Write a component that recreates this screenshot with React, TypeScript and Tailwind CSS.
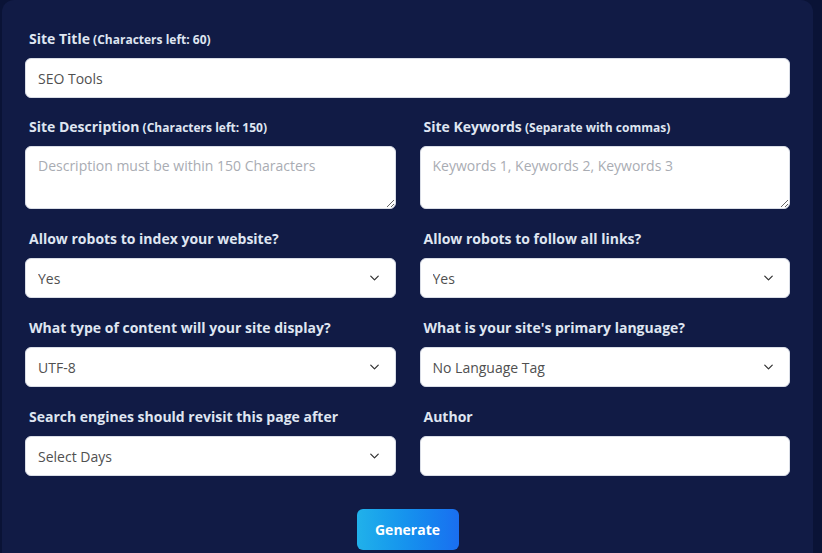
import { ChevronDown } from 'lucide-react'

const font = { fontFamily: '"Open Sans", "Liberation Sans", sans-serif' }

const Label = ({ title, hint }: { title: string; hint?: string }) => (
  <label className="block h-5 leading-5 mb-[9px] pl-1 text-[14px] font-bold text-[#dfe5f1] whitespace-nowrap">
    {title}
    {hint && <span className="text-[12px] font-bold"> ({hint})</span>}
  </label>
)

const inputCls =
  'w-full h-10 rounded-md bg-white px-[12px] text-[14px] text-[#505050] outline-none border border-[#d9dde6] placeholder:text-[#a9acb3]'

const Select = ({ value }: { value: string }) => (
  <div className="relative">
    <select className={`${inputCls} appearance-none pr-8`} defaultValue={value}>
      <option>{value}</option>
    </select>
    <ChevronDown className="absolute right-[14px] top-1/2 -translate-y-1/2 w-[15px] h-[15px] text-[#333] pointer-events-none" strokeWidth={2} />
  </div>
)

const Field = ({ title, hint, children }: { title: string; hint?: string; children: React.ReactNode }) => (
  <div>
    <Label title={title} hint={hint} />
    {children}
  </div>
)

export default function App() {
  return (
    <div className="min-h-screen bg-[#0a1336] pl-[2px] pr-[9px]" style={font}>
      <div className="bg-[#111b45] rounded-t-xl px-[23px] pt-[29px] pb-[10px] min-h-[553px]">
        <div className="flex flex-col gap-[19px]">
          <Field title="Site Title" hint="Characters left: 60">
            <input className={inputCls} defaultValue="SEO Tools" />
          </Field>
          <div className="grid grid-cols-2 gap-x-6 gap-y-5">
            <Field title="Site Description" hint="Characters left: 150">
              <textarea
                className={`${inputCls} h-[63px] py-[8px] block`}
                placeholder="Description must be within 150 Characters"
              />
            </Field>
            <Field title="Site Keywords" hint="Separate with commas">
              <textarea
                className={`${inputCls} h-[63px] py-[8px] block`}
                placeholder="Keywords 1, Keywords 2, Keywords 3"
              />
            </Field>
            <Field title="Allow robots to index your website?">
              <Select value="Yes" />
            </Field>
            <Field title="Allow robots to follow all links?">
              <Select value="Yes" />
            </Field>
            <Field title="What type of content will your site display?">
              <Select value="UTF-8" />
            </Field>
            <Field title="What is your site's primary language?">
              <Select value="No Language Tag" />
            </Field>
            <Field title="Search engines should revisit this page after">
              <Select value="Select Days" />
            </Field>
            <Field title="Author">
              <input className={inputCls} />
            </Field>
          </div>
        </div>
        <div className="flex justify-center mt-[33px]">
          <button className="w-[102px] h-[41px] rounded-md bg-gradient-to-r from-[#21b1ea] to-[#1a6ef0] text-white text-[14px] font-bold">
            Generate
          </button>
        </div>
      </div>
    </div>
  )
}
